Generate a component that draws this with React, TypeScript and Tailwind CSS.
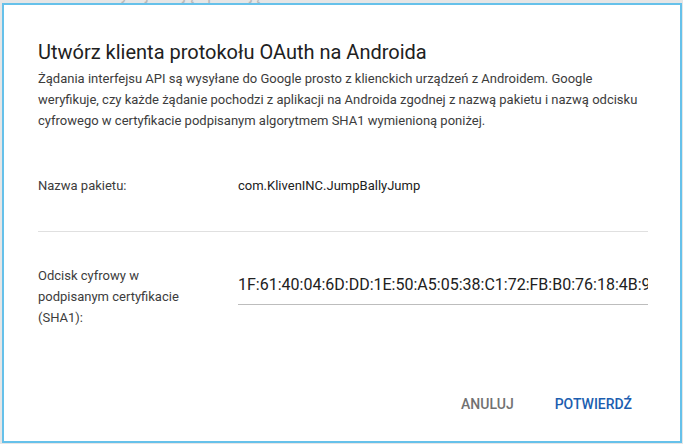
const font = { fontFamily: 'Roboto, "Noto Sans", Arial, sans-serif' };

export default function App() {
  return (
    <div
      className="relative w-[683px] h-[444px] overflow-hidden bg-[#e6e6e6] pl-[2px] pt-[3px] pr-[1px] pb-[1px] flex"
      style={font}
    >
      {/* strona pod dialogiem, prawie całkiem zakryta */}
      <div className="absolute left-[30px] top-[-13px] text-[16px] leading-[16px] text-[#b8b8b8]">
        Krok 2: autoryzuj swoją aplikację
      </div>

      <div className="relative flex-1 min-w-0 flex flex-col bg-white border-2 border-[#66c1ea] pl-[34px] pr-[32px] pt-[35px] pb-[19px]">
        <h1 className="text-[20px] leading-[24px] text-[#212121] font-normal">
          Utwórz klienta protokołu OAuth na Androida
        </h1>
        <p className="mt-[4px] text-[13px] leading-[21px] text-[#3c3c3c]">
          Żądania interfejsu API są wysyłane do Google prosto z klienckich urządzeń z Androidem. Google
          weryfikuje, czy każde żądanie pochodzi z aplikacji na Androida zgodnej z nazwą pakietu i nazwą odcisku
          cyfrowego w certyfikacie podpisanym algorytmem SHA1 wymienioną poniżej.
        </p>

        <div className="mt-[45px] flex text-[13px] leading-[20px]">
          <div className="w-[200px] shrink-0 text-[#3c3c3c]">Nazwa pakietu:</div>
          <div className="text-[#212121]">com.KlivenINC.JumpBallyJump</div>
        </div>

        <div className="mt-[35px] h-px bg-[#e0e0e0]" />

        <div className="mt-[33px] flex items-start">
          <div className="w-[200px] shrink-0 text-[13px] leading-[21px] text-[#3c3c3c]">
            Odcisk cyfrowy w
            <br />
            podpisanym certyfikacie
            <br />
            (SHA1):
          </div>
          <div className="flex-1 min-w-0 mt-[10px] border-b border-[#bdbdbd] pb-[9px] overflow-hidden whitespace-nowrap text-[16px] leading-[20px] text-[#212121]">
            1F:61:40:04:6D:DD:1E:50:A5:05:38:C1:72:FB:B0:76:18:4B:9A:2C
          </div>
        </div>

        <div className="mt-auto flex justify-end gap-[9px]">
          <button className="h-[36px] px-4 text-[14px] font-medium uppercase text-[#717171]">
            Anuluj
          </button>
          <button className="h-[36px] px-4 text-[14px] font-medium uppercase text-[#1c5eb0]">
            Potwierdź
          </button>
        </div>
      </div>
    </div>
  );
}
